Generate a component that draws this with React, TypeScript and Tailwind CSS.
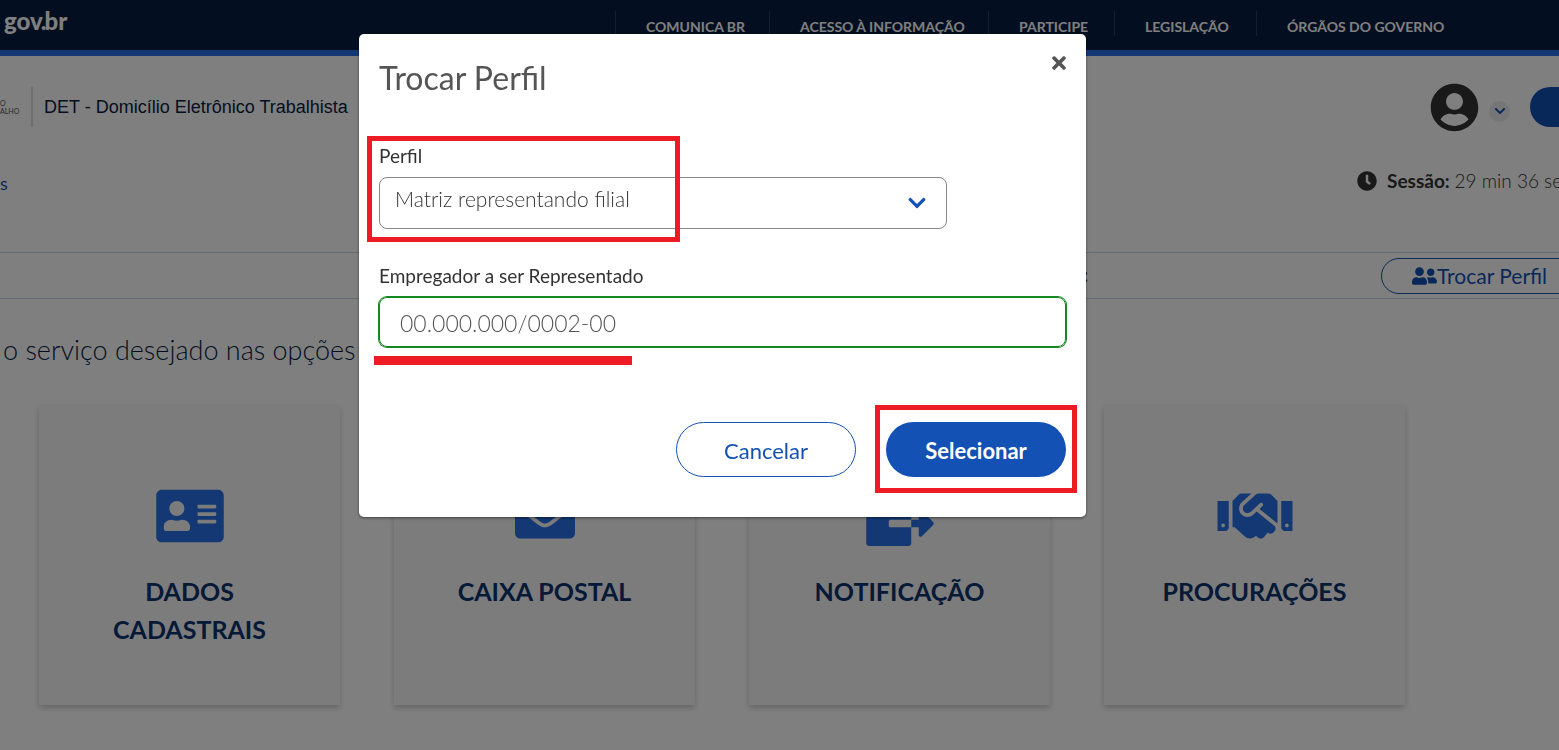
import React, { useState } from 'react';
import type { IconType } from 'react-icons';
import {
  FaAddressCard,
  FaChevronDown,
  FaClock,
  FaEnvelope,
  FaFileExport,
  FaHandshake,
  FaTimes,
  FaUserCircle,
  FaUserFriends,
} from 'react-icons/fa';

interface ServiceItem {
  title: string;
  icon: IconType;
  iconWidth: string;
}

const navLinks = ['Comunica BR', 'Acesso à Informação', 'Participe', 'Legislação', 'Órgãos do Governo'];

const services: ServiceItem[] = [
  { title: 'Dados Cadastrais', icon: FaAddressCard, iconWidth: 'w-[68px]' },
  { title: 'Caixa Postal', icon: FaEnvelope, iconWidth: 'w-[60px]' },
  { title: 'Notificação', icon: FaFileExport, iconWidth: 'w-[68px]' },
  { title: 'Procurações', icon: FaHandshake, iconWidth: 'w-[76px]' },
];

function GovBar() {
  return (
    <header className="flex h-[56px] items-start justify-between border-b-[6px] border-[#2670e8] bg-[#071d41] text-white">
      <a href="#" className="pl-1 text-[24px] leading-[42px] font-black">
        gov<span className="-mx-0.5">.</span>br
      </a>
      <nav className="mt-[11px] mr-[117px] grid grid-cols-[154px_219px_126px_142px_186px]">
        {navLinks.map((label) => (
          <a
            key={label}
            href="#"
            className="h-[25px] border-l border-white/15 pl-[30px] text-[14px] leading-[32px] font-bold whitespace-nowrap uppercase"
          >
            {label}
          </a>
        ))}
      </nav>
    </header>
  );
}

function BrandBar() {
  return (
    <div className="flex h-[102px] items-center justify-between">
      <div className="flex items-center">
        <div className="w-5 text-[7px] leading-[8px] text-[#555555]">
          <span className="block">O</span>
          <span className="block">ALHO</span>
        </div>
        <div className="mx-[11px] h-10 w-0.5 bg-[#dddddd]" />
        <h1 className="font-['Liberation_Sans',Arial,sans-serif] text-[18px] text-[#071d41]">
          DET - Domicílio Eletrônico Trabalhista
        </h1>
      </div>
      <div className="-mr-20 flex items-center">
        <FaUserCircle className="size-[49px] text-[#333333]" />
        <button
          type="button"
          aria-label="Menu do usuário"
          className="mt-2 ml-[10px] flex size-[21px] items-center justify-center rounded-full bg-[#ededed] text-[#1351b4]"
        >
          <FaChevronDown className="size-3" />
        </button>
        <button type="button" aria-label="Sair" className="ml-5 h-10 w-[109px] rounded-full bg-[#1351b4]" />
      </div>
    </div>
  );
}

function ServiceCard({ title, icon: Icon, iconWidth }: ServiceItem) {
  return (
    <a
      href="#"
      className="flex h-[300px] flex-col items-center bg-[#f8f8f8] px-10 pt-[81px] text-center shadow-[0_3px_6px_rgba(0,0,0,0.2)]"
    >
      <Icon className={`h-[60px] text-[#2670e8] ${iconWidth}`} />
      <span className="mt-[26px] text-[25px] leading-[38px] font-bold text-[#0c326f] uppercase">{title}</span>
    </a>
  );
}

function ProfileDialog({ onClose }: { onClose: () => void }) {
  const [profile, setProfile] = useState('filial');
  const [employer, setEmployer] = useState('00.000.000/0002-00');

  return (
    <div className="fixed inset-0 flex items-start justify-center bg-black/50 pt-[34px] pr-[114px]">
      <div
        role="dialog"
        aria-modal="true"
        aria-labelledby="dialog-title"
        className="w-full max-w-[727px] rounded-[5px] bg-white px-5 pb-10 shadow-[0_1px_3px_rgba(0,0,0,0.5)]"
      >
        <div className="flex items-start justify-between pt-[22px]">
          <h2 id="dialog-title" className="text-[32px] leading-[44px] text-[#555555]">Trocar Perfil</h2>
          <button type="button" aria-label="Fechar" onClick={onClose} className="-mt-[3px] text-[#555555]">
            <FaTimes className="h-5 w-[14px]" />
          </button>
        </div>

        {/* Profile field, marked in red as a step of the guide */}
        <div className="relative mt-[44px]">
          <label htmlFor="profile" className="block text-[19px] leading-6 text-[#333333]">Perfil</label>
          <div className="relative mt-[9px] w-[568px] max-w-full">
            <select
              id="profile"
              value={profile}
              onChange={(e) => setProfile(e.target.value)}
              className="block h-[52px] w-full appearance-none rounded-lg border border-[#888888] bg-white px-[15px] pb-2 text-[21px] font-light text-[#333333]"
            >
              <option value="filial">Matriz representando filial</option>
              <option value="procurador">Procurador</option>
            </select>
            <FaChevronDown className="pointer-events-none absolute top-4 right-5 size-5 text-[#1351b4]" />
          </div>
          <div className="pointer-events-none absolute -top-2 -left-3 h-[106px] w-[313px] border-[5px] border-[#ed1c24]" />
        </div>

        <div className="relative mt-[35px]">
          <label htmlFor="employer" className="block text-[19px] leading-6 text-[#333333]">
            Empregador a ser Representado
          </label>
          <input
            id="employer"
            type="text"
            value={employer}
            onChange={(e) => setEmployer(e.target.value)}
            className="mt-[9px] block h-[50px] w-full rounded-lg border border-[#168821] px-5 pt-0.5 text-[23px] font-light text-[#555555] ring-1 ring-[#168821] outline-none"
          />
          <div className="pointer-events-none absolute top-[92px] -left-[5px] h-[9px] w-[258px] bg-[#ed1c24]" />
        </div>

        <div className="mt-[75px] flex justify-end gap-[30px]">
          <button
            type="button"
            onClick={onClose}
            className="h-[55px] w-[180px] rounded-full border border-[#1351b4] pt-0.5 text-[22px] text-[#1351b4]"
          >
            Cancelar
          </button>
          <div className="relative">
            <button
              type="button"
              onClick={onClose}
              className="h-[55px] w-[180px] rounded-full bg-[#1351b4] pt-0.5 text-[22px] font-bold text-white"
            >
              Selecionar
            </button>
            <div className="pointer-events-none absolute -top-[17px] -left-[11px] h-[88px] w-[202px] border-[5px] border-[#ed1c24]" />
          </div>
        </div>
      </div>
    </div>
  );
}

export default function App() {
  const [dialogOpen, setDialogOpen] = useState(true);

  return (
    <div className="min-h-screen overflow-hidden bg-white font-[Lato,'Open_Sans',sans-serif]">
      <GovBar />
      <BrandBar />

      <div className="flex h-[46px] items-center justify-between">
        <a href="#" className="mt-1 text-[18px] text-[#1351b4]">s</a>
        <div className="flex w-[202px] items-center text-[19px] whitespace-nowrap text-[#333333]">
          <FaClock className="mr-[10px] size-5 shrink-0" />
          <p>
            <strong>Sessão:</strong> <span className="font-light">29 min 36 se</span>
          </p>
        </div>
      </div>

      {/* Toolbar with the current employer and the profile switch */}
      <div className="mt-12 flex h-[47px] items-center justify-end border-y border-[#c5d4eb]">
        <span className="mr-[293px] text-[18px] font-bold text-[#071d41]">:</span>
        <button
          type="button"
          onClick={() => setDialogOpen(true)}
          className="-mr-5 flex h-9 w-[198px] items-center rounded-full border border-[#1351b4] pl-[30px] text-[21px] whitespace-nowrap text-[#1351b4]"
        >
          <FaUserFriends className="h-5 w-[25px] shrink-0" />
          Trocar Perfil
        </button>
      </div>

      <main>
        <p className="mt-8 pl-[3px] text-[27px] leading-[38px] font-light text-[#071d41]">
          o serviço desejado nas opções
        </p>
        <div className="mt-9 grid grid-cols-4 gap-[54px] pr-[154px] pb-[45px] pl-[39px]">
          {services.map((service) => (
            <ServiceCard key={service.title} {...service} />
          ))}
        </div>
      </main>

      {dialogOpen && <ProfileDialog onClose={() => setDialogOpen(false)} />}
    </div>
  );
}
